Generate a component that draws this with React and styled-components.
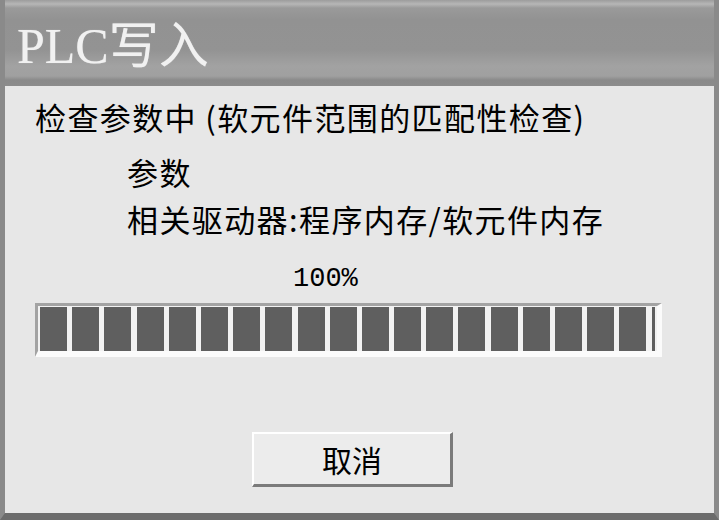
import styled, { createGlobalStyle } from "styled-components";

const GlobalStyle = createGlobalStyle`
  html, body {
    margin: 0;
    padding: 0;
    background: #e7e7e7;
  }
`;

const Window = styled.div`
  width: 719px;
  height: 520px;
  box-sizing: border-box;
  display: flex;
  flex-direction: column;
  background-color: #e7e7e7;
  border-left: 5px solid #8a8a8a;
  border-right: 5px solid #8a8a8a;
  border-bottom: 7px solid #6c6c6c;
  overflow: hidden;
`;

const TitleBar = styled.div`
  height: 86px;
  box-sizing: border-box;
  padding: 21px 0 0 12px;
  background: linear-gradient(
    to bottom,
    #9c9c9c 0px,
    #b6b6b6 4px,
    #9a9a9a 8px,
    #929292 20px,
    #939393 50px,
    #a2a2a2 66px,
    #a0a0a0 76px,
    #8a8a8a 80px,
    #8c8c8c 86px
  );

  h1 {
    margin: 0;
    font-family: "Liberation Serif", "Noto Sans CJK SC", serif;
    font-size: 50px;
    line-height: 1;
    font-weight: normal;
    color: #f1f1f1;
    text-shadow: 0 0 1px rgba(255, 255, 255, 0.5);
  }
`;

const Body = styled.div`
  flex: 1;
  display: flex;
  flex-direction: column;
  align-items: flex-start;
  padding-left: 30px;
  font-family: "Noto Sans CJK SC", sans-serif;
  color: #000;
`;

const Line = styled.div`
  font-size: 31px;
  line-height: 40px;
  letter-spacing: 1.4px;
  margin-top: ${(props) => props.$top}px;
  margin-left: ${(props) => (props.$indent ? 92 : 0)}px;
  white-space: nowrap;
`;

const Percent = styled.div`
  font-family: "Liberation Mono", monospace;
  font-size: 27px;
  line-height: 30px;
  margin: 25px 0 0 258px;
`;

const Track = styled.div`
  width: 627px;
  height: 54px;
  box-sizing: border-box;
  margin-top: 9px;
  display: flex;
  gap: 5.2px;
  padding: 1px 0 0 2px;
  background-color: #f2f2f2;
  border-top: 3px solid #a3a3a3;
  border-left: 3px solid #a3a3a3;
  border-bottom: 6px solid #fbfbfb;
  border-right: 5px solid #fbfbfb;
  overflow: hidden;
`;

const Block = styled.div`
  flex: none;
  width: ${(props) => props.$w}px;
  height: 44px;
  background-color: #5f5f5f;
`;

const CancelButton = styled.button`
  width: 201px;
  height: 55px;
  margin: 75px 0 0 217px;
  box-sizing: border-box;
  background-color: #ececec;
  border-top: 2px solid #ffffff;
  border-left: 2px solid #ffffff;
  border-bottom: 3px solid #7b7b7b;
  border-right: 3px solid #7b7b7b;
  font-family: "Noto Sans CJK SC", sans-serif;
  font-size: 30px;
  line-height: 1;
  color: #000;
  padding: 0;
`;

const blocks = [...Array(19).fill(27), 3];

export default function App() {
  return (
    <>
      <GlobalStyle />
      <Window>
        <TitleBar>
          <h1>PLC写入</h1>
        </TitleBar>
        <Body>
          <Line $top={11}>检查参数中 (软元件范围的匹配性检查)</Line>
          <Line $top={15} $indent>
            参数
          </Line>
          <Line $top={7} $indent>
            相关驱动器:程序内存/软元件内存
          </Line>
          <Percent>100%</Percent>
          <Track>
            {blocks.map((w, i) => (
              <Block key={i} $w={w} />
            ))}
          </Track>
          <CancelButton>取消</CancelButton>
        </Body>
      </Window>
    </>
  );
}
